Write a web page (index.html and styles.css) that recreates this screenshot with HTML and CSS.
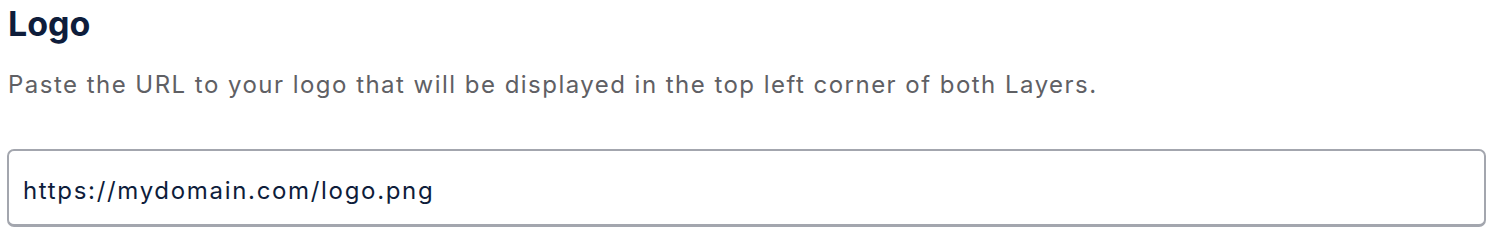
FILE: index.html
```html
<!DOCTYPE html>
<html>
<head>
<meta charset="utf-8">
<link rel="stylesheet" href="styles.css">
</head>
<body>
<section class="field">
  <h2 class="field-title">Logo</h2>
  <p class="field-desc">Paste the URL to your logo that will be displayed in the top left corner of both Layers.</p>
  <input class="field-input" type="text" value="https://mydomain.com/logo.png">
</section>
</body>
</html>
```
FILE: styles.css
```css
html, body {
  margin: 0;
  padding: 0;
  background: #ffffff;
}
body {
  font-family: Inter, "Liberation Sans", sans-serif;
}
.field {
  display: flex;
  flex-direction: column;
  padding: 0 8px 0 7px;
}
.field-title {
  margin: 2px 0 0 1px;
  font-size: 34px;
  line-height: 44px;
  font-weight: 700;
  color: #0e1d3b;
}
.field-desc {
  margin: 25px 0 0 1px;
  font-size: 24px;
  line-height: 28px;
  font-weight: 400;
  letter-spacing: 1.47px;
  color: #5f6064;
}
.field-input {
  box-sizing: border-box;
  margin-top: 50px;
  width: 100%;
  height: 78px;
  padding: 5px 14px 0;
  border: 2px solid #a3a6ae;
  border-bottom-width: 3px;
  border-radius: 7px;
  font-family: Inter, "Liberation Sans", sans-serif;
  font-size: 24px;
  letter-spacing: 1.68px;
  color: #0e1d3b;
  background: #fff;
  outline: none;
}
```
